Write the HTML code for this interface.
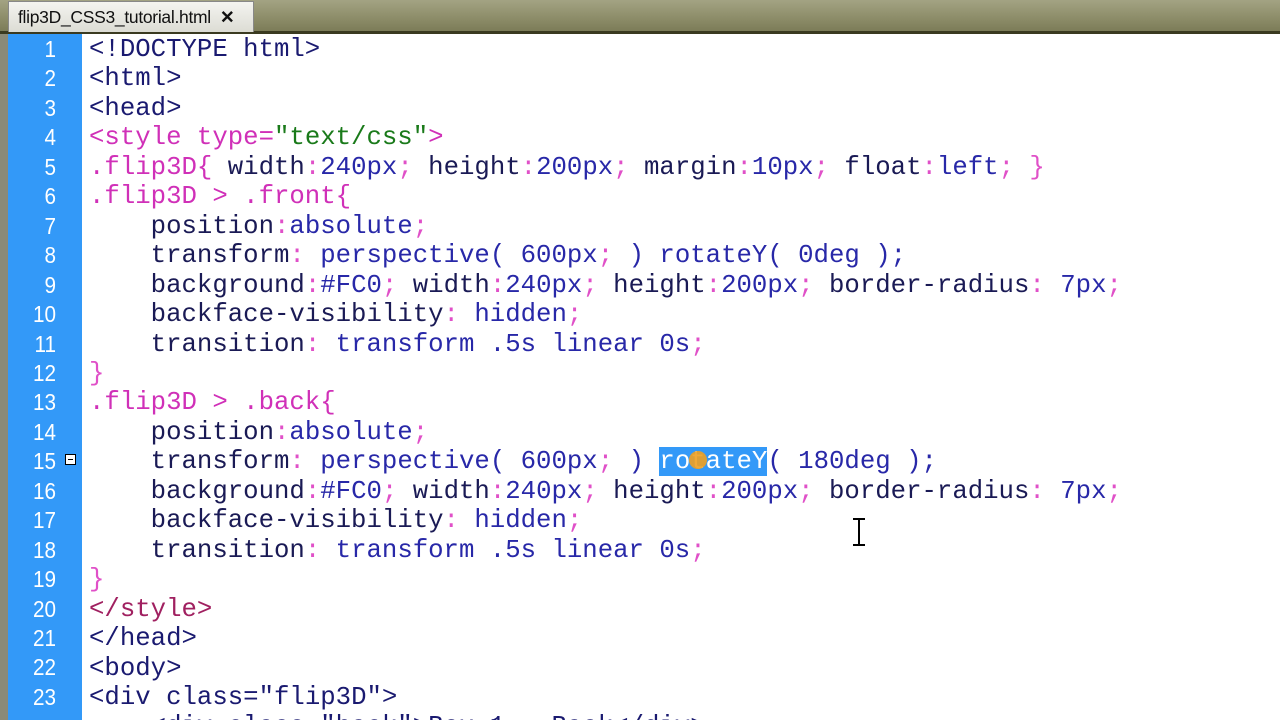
<!DOCTYPE html>
<html style="overflow:hidden;width:1280px;height:720px"><head><style>
body{margin:0;width:1280px;height:720px;overflow:hidden;background:#fff;position:relative;font-family:"Liberation Mono",monospace}
.bar{position:absolute;left:0;top:0;width:1280px;height:31px;background:linear-gradient(#a3a383,#8c8c68 60%,#7c7c58)}
.bar2{position:absolute;left:0;top:31px;width:1280px;height:3px;background:#3a3a20}
.tab{position:absolute;left:8px;top:1px;width:246px;height:31px;background:linear-gradient(#f4f4f0,#dcdcd4);border:1px solid #888;border-bottom:none;font:17.5px "Liberation Sans",sans-serif;color:#111;line-height:30px;padding-left:9px;box-sizing:border-box;white-space:nowrap;letter-spacing:-0.3px}
.strip{position:absolute;left:0;top:34px;width:8px;height:686px;background:#8a8a78}
.gut{position:absolute;left:8px;top:34px;width:74px;height:686px;background:#3399f8}
.ln{position:absolute;left:8px;width:48px;text-align:right;color:#fff;font:23px "Liberation Sans",sans-serif;line-height:29.45px;transform:scaleX(0.9);transform-origin:right}
.code{position:absolute;left:89px;white-space:pre;font-size:25.7px;line-height:29.45px;color:#1a1a55}
.t{color:#1a1a70}.m{color:#d030b8}.p{color:#e050c8}.v{color:#2828a8}.g{color:#1a7a1a}.r{color:#a02060}
.sel{background:#3399f8;color:#fff}
</style></head><body>
<div class="bar"></div><div class="bar2"></div>
<div class="tab">flip3D_CSS3_tutorial.html&nbsp;&nbsp;<span style="font-weight:bold">✕</span></div>
<div class="strip"></div><div class="gut"></div>
<div style="position:absolute;left:65px;top:454px;width:11px;height:11px;background:#fff;border:1px solid #000;box-sizing:border-box"><div style="position:absolute;left:2px;top:4px;width:5px;height:1px;background:#000"></div></div>
<div class="ln" style="top:35px">1</div><div class="ln" style="top:64.45px">2</div><div class="ln" style="top:93.9px">3</div><div class="ln" style="top:123.35px">4</div><div class="ln" style="top:152.8px">5</div><div class="ln" style="top:182.25px">6</div><div class="ln" style="top:211.7px">7</div><div class="ln" style="top:241.15px">8</div><div class="ln" style="top:270.6px">9</div><div class="ln" style="top:300.05px">10</div><div class="ln" style="top:329.5px">11</div><div class="ln" style="top:358.95px">12</div><div class="ln" style="top:388.4px">13</div><div class="ln" style="top:417.85px">14</div><div class="ln" style="top:447.3px">15</div><div class="ln" style="top:476.75px">16</div><div class="ln" style="top:506.2px">17</div><div class="ln" style="top:535.65px">18</div><div class="ln" style="top:565.1px">19</div><div class="ln" style="top:594.55px">20</div><div class="ln" style="top:624px">21</div><div class="ln" style="top:653.45px">22</div><div class="ln" style="top:682.9px">23</div>
<div class="code" style="top:35px;height:685px;overflow:hidden"><span class="t">&lt;!DOCTYPE html&gt;</span>
<span class="t">&lt;html&gt;</span>
<span class="t">&lt;head&gt;</span>
<span class="m">&lt;style type=</span><span class="g">"text/css"</span><span class="m">&gt;</span>
<span class="m">.flip3D{</span> width<span class="p">:</span><span class="v">240px</span><span class="p">;</span> height<span class="p">:</span><span class="v">200px</span><span class="p">;</span> margin<span class="p">:</span><span class="v">10px</span><span class="p">;</span> float<span class="p">:</span><span class="v">left</span><span class="p">; }</span>
<span class="m">.flip3D &gt; .front{</span>
    position<span class="p">:</span><span class="v">absolute</span><span class="p">;</span>
    transform<span class="p">:</span> <span class="v">perspective( 600px</span><span class="p">;</span> <span class="v">) rotateY( 0deg );</span>
    background<span class="p">:</span><span class="v">#FC0</span><span class="p">;</span> width<span class="p">:</span><span class="v">240px</span><span class="p">;</span> height<span class="p">:</span><span class="v">200px</span><span class="p">;</span> border-radius<span class="p">:</span> <span class="v">7px</span><span class="p">;</span>
    backface-visibility<span class="p">:</span> <span class="v">hidden</span><span class="p">;</span>
    transition<span class="p">:</span> <span class="v">transform .5s linear 0s</span><span class="p">;</span>
<span class="p">}</span>
<span class="m">.flip3D &gt; .back{</span>
    position<span class="p">:</span><span class="v">absolute</span><span class="p">;</span>
    transform<span class="p">:</span> <span class="v">perspective( 600px</span><span class="p">;</span> <span class="v">) </span><span class="sel">rotateY</span><span class="v">( 180deg );</span>
    background<span class="p">:</span><span class="v">#FC0</span><span class="p">;</span> width<span class="p">:</span><span class="v">240px</span><span class="p">;</span> height<span class="p">:</span><span class="v">200px</span><span class="p">;</span> border-radius<span class="p">:</span> <span class="v">7px</span><span class="p">;</span>
    backface-visibility<span class="p">:</span> <span class="v">hidden</span><span class="p">;</span>
    transition<span class="p">:</span> <span class="v">transform .5s linear 0s</span><span class="p">;</span>
<span class="p">}</span>
<span class="r">&lt;/style&gt;</span>
<span class="t">&lt;/head&gt;</span>
<span class="t">&lt;body&gt;</span>
<span class="t">&lt;div class=</span><span class="t">"flip3D"</span><span class="t">&gt;</span>
    <span class="t">&lt;div class="back"&gt;Box 1 - Back&lt;/div&gt;</span></div>
<div style="position:absolute;left:689px;top:451px;width:18px;height:18px;border-radius:50%;background:#f0a020;opacity:.9"></div>
<div style="position:absolute;left:858px;top:518px;width:2px;height:28px;background:#000"></div>
<div style="position:absolute;left:853px;top:518px;width:12px;height:2px;background:#000"></div>
<div style="position:absolute;left:853px;top:544px;width:12px;height:2px;background:#000"></div>
</body></html>
